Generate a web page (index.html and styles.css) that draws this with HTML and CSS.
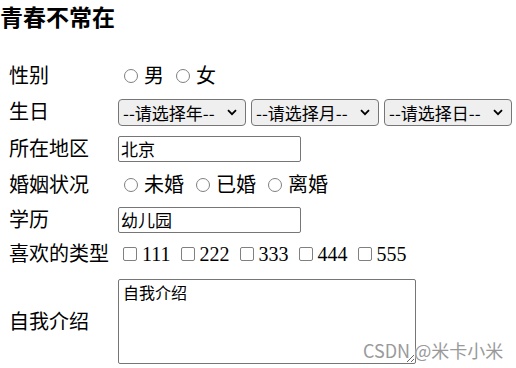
FILE: index.html
```html
<!DOCTYPE html>
<html lang="zh-CN">
<head>
  <meta charset="UTF-8">
  <title>青春不常在</title>
  <link rel="stylesheet" href="styles.css">
</head>
<body>

<h3 class="title">青春不常在</h3>

<form class="form">
  <label class="name">性别</label>
  <div class="field">
    <label class="opt"><input type="radio" name="sex">男</label>
    <label class="opt"><input type="radio" name="sex">女</label>
  </div>

  <label class="name">生日</label>
  <div class="field dates">
    <span class="sel">
      <select><option>--请选择年--</option></select>
      <svg class="arrow" width="10" height="7" viewBox="0 0 10 7"><path d="M1 1.2 L5 5.2 L9 1.2" fill="none" stroke="#000" stroke-width="1.8"/></svg>
    </span>
    <span class="sel">
      <select><option>--请选择月--</option></select>
      <svg class="arrow" width="10" height="7" viewBox="0 0 10 7"><path d="M1 1.2 L5 5.2 L9 1.2" fill="none" stroke="#000" stroke-width="1.8"/></svg>
    </span>
    <span class="sel">
      <select><option>--请选择日--</option></select>
      <svg class="arrow" width="10" height="7" viewBox="0 0 10 7"><path d="M1 1.2 L5 5.2 L9 1.2" fill="none" stroke="#000" stroke-width="1.8"/></svg>
    </span>
  </div>

  <label class="name">所在地区</label>
  <div class="field">
    <input type="text" class="text" value="北京">
  </div>

  <label class="name">婚姻状况</label>
  <div class="field">
    <label class="opt"><input type="radio" name="marry">未婚</label>
    <label class="opt"><input type="radio" name="marry">已婚</label>
    <label class="opt"><input type="radio" name="marry">离婚</label>
  </div>

  <label class="name">学历</label>
  <div class="field">
    <input type="text" class="text" value="幼儿园">
  </div>

  <label class="name">喜欢的类型</label>
  <div class="field checks">
    <label class="opt"><input type="checkbox">111</label>
    <label class="opt"><input type="checkbox">222</label>
    <label class="opt"><input type="checkbox">333</label>
    <label class="opt"><input type="checkbox">444</label>
    <label class="opt"><input type="checkbox">555</label>
  </div>

  <label class="name">自我介绍</label>
  <div class="field">
    <textarea class="intro">自我介绍</textarea>
  </div>
</form>

<div class="mark">CSDN @米卡小米</div>

</body>
</html>
```

FILE: styles.css
```css
body {
  margin: 0;
  font-family: "Liberation Serif", "Noto Sans CJK SC", serif;
  color: #000;
  background: #fff;
}
.title {
  margin: 0 0 24px 0;
  padding: 4px 0 0 0;
  font-size: 23px;
  line-height: 30px;
  font-weight: bold;
}
.form {
  display: grid;
  grid-template-columns: 118px 1fr;
  grid-template-rows: 36px 36px 37px 35px 35px 34px auto;
  align-items: center;
  font-size: 20px;
  line-height: 24px;
}
.name {
  padding-left: 9px;
}
.field {
  display: flex;
  align-items: center;
}
.opt {
  display: inline-flex;
  align-items: center;
  margin-right: 6px;
}
.opt input {
  appearance: none;
  box-sizing: border-box;
  flex: none;
  width: 14px;
  height: 14px;
  border: 1.6px solid #808080;
  background: #fff;
}
.opt input[type="radio"] {
  border-radius: 50%;
  margin: 0 6px 0 6px;
}
.opt input[type="checkbox"] {
  border-radius: 2px;
  margin: 0 5px 0 5px;
}
.checks .opt {
  margin-right: 5px;
}
.dates {
  gap: 5px;
}
.sel {
  position: relative;
  display: inline-block;
  height: 27px;
}
select {
  appearance: none;
  box-sizing: border-box;
  width: 128px;
  height: 27px;
  padding: 0 0 0 4px;
  font-family: "Noto Sans CJK SC", sans-serif;
  font-size: 17px;
  border: 1px solid #767676;
  border-radius: 4px;
  background-color: #efefef;
  color: #000;
}
.arrow {
  position: absolute;
  right: 9px;
  top: 10px;
  pointer-events: none;
}
.text {
  box-sizing: border-box;
  width: 183px;
  height: 26px;
  padding: 1px 2px;
  font-family: "Noto Sans CJK SC", sans-serif;
  font-size: 17px;
  border: 1px solid #767676;
  border-radius: 2px;
}
.intro {
  box-sizing: border-box;
  width: 298px;
  height: 85px;
  margin: 8px 0;
  padding: 2px 4px;
  font-family: "Noto Sans CJK SC", sans-serif;
  font-size: 16px;
  line-height: 20px;
  border: 1px solid #767676;
  border-radius: 2px;
}
.mark {
  position: absolute;
  left: 363px;
  top: 338px;
  font-family: "Noto Sans CJK SC", sans-serif;
  font-size: 18px;
  line-height: 24px;
  color: #9a9a9a;
  text-shadow: 0 0 2px #fff;
}
```
